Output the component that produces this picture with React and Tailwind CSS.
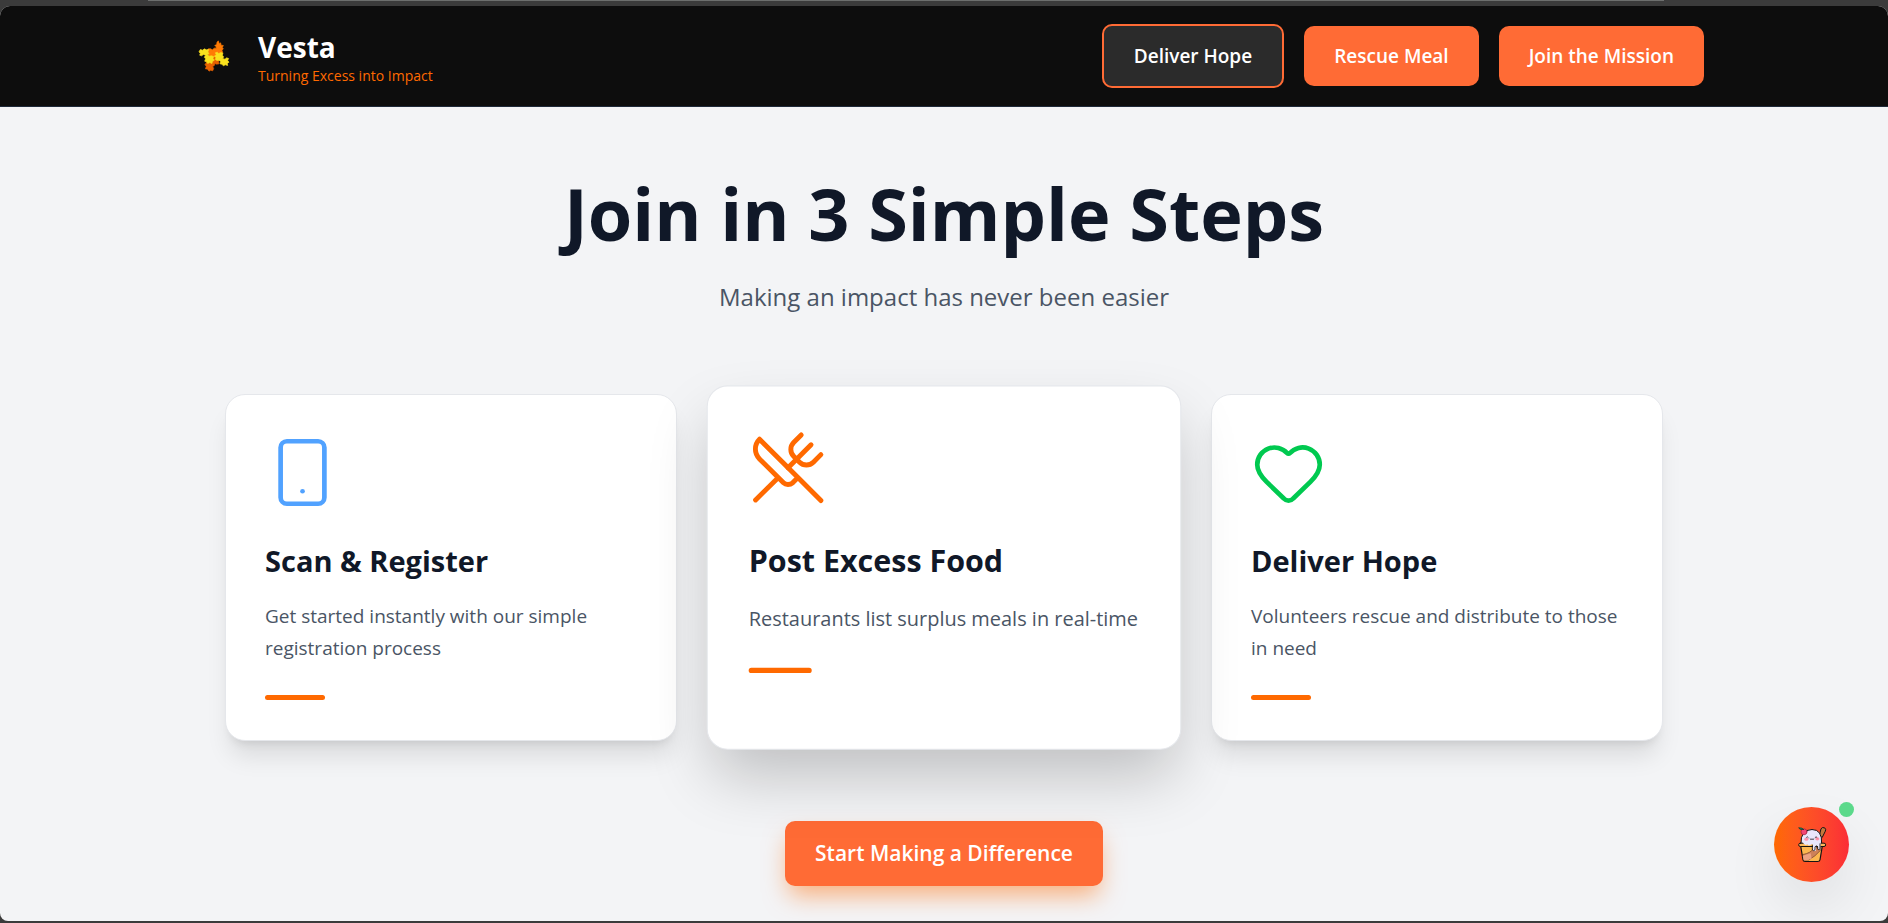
import { Heart, Smartphone, UtensilsCrossed } from "lucide-react";

function Logo() {
  return (
    <svg viewBox="55 28 96 98" className="h-[33px] w-8" strokeWidth="2" strokeLinejoin="round" aria-hidden="true">
      <polygon
        fill="#ff7b05"
        stroke="#ff7b05"
        points="116,30 119,39 123,36 124,43 131,44 128,50 131,54 127,58 129,66 123,72 116,71 110,78 104,79 99,84 93,80 87,81 88,74 84,70 87,65 83,60 86,54 93,54 98,57 104,52 110,52 109,46 105,44 111,41 112,34"
      />
      <polygon
        fill="#e96200"
        stroke="#e96200"
        points="96,82 102,77 110,76 118,80 120,87 117,92 118,99 111,100 106,98 104,104 99,107 102,113 99,120 93,118 88,121 84,115 77,114 80,107 76,101 80,96 80,88 88,90"
      />
      <polygon
        fill="#f9e11e"
        stroke="#f9e11e"
        points="62,56 69,58 74,54 80,57 87,56 85,63 88,68 84,72 89,76 95,75 102,77 100,83 104,88 98,92 97,98 90,95 84,98 81,93 75,91 78,84 74,79 78,73 71,71 66,75 60,73 62,68 58,63"
      />
      <polygon
        fill="#f9e11e"
        stroke="#f9e11e"
        points="107,66 113,64 117,68 124,65 130,67 128,73 132,78 129,83 136,85 141,81 147,83 144,89 148,94 143,97 144,104 137,102 131,105 127,100 121,99 123,92 118,88 112,89 107,86 109,80 104,76 110,72"
      />
    </svg>
  );
}

function IceCream() {
  return (
    <svg viewBox="170 136 90 110" className="h-[37px] w-[30px]" strokeLinejoin="round" strokeLinecap="round" aria-hidden="true">
      <path d="M237 164l5-20q3-6 11-3 5 4 2 10l-9 18z" fill="#c4793d" stroke="#151313" strokeWidth="3" />
      <path d="M182 188q-2-41 33-42 31 0 29 42z" fill="#e9e6fb" stroke="#151313" strokeWidth="3" />
      <path d="M181 195l7 42q1 5 6 5h38q6 0 7-5l7-42z" fill="#fdb750" stroke="#151313" strokeWidth="3.5" />
      <path d="M188 221q24-4 34-21h20l-1 8q-16 19-37 30h-13z" fill="#cf8159" stroke="#4b211a" strokeWidth="1.5" />
      <path d="M187 225l24-8 3 16-12 5h-12z" fill="#eda182" />
      <rect x="175" y="187" width="81" height="10" rx="5" fill="#fdb95a" stroke="#151313" strokeWidth="3" />
      <path d="M185 178q28-7 57 0l-1 11-1 16q-4 4-7-1v-8q-5-3-6 2v10q-5 5-9 0v-16q-2-4-7 0-6 5-10-2-5 5-11-1z" fill="#e9e6fb" />
      <path d="M216 193v14q4 5 8 0v-9q4-6 8 0v7q4 4 7-1v-15" fill="none" stroke="#151313" strokeWidth="2.5" />
      <circle cx="191" cy="153" r="9" fill="#f34774" stroke="#9d1839" strokeWidth="2" />
      <path d="M190 146q-4-6-15-5 2 7 14 5" fill="#159669" stroke="#123d32" strokeWidth="2.5" />
      <ellipse cx="198" cy="175" rx="6" ry="5" fill="#ff92a9" />
      <ellipse cx="231" cy="174" rx="6" ry="5" fill="#ff92a9" />
      <path d="M199 169q3-3 5 1M225 169q3-3 5 1M209 174q3 5 6 0 3 5 6 0" fill="none" stroke="#201a21" strokeWidth="2.5" />
    </svg>
  );
}

const steps = [
  {
    title: "Scan & Register",
    text: "Get started instantly with our simple registration process",
    Icon: Smartphone,
    color: "text-[#51a2ff]",
    frame: "shadow-xl",
  },
  {
    title: "Post Excess Food",
    text: "Restaurants list surplus meals in real-time",
    Icon: UtensilsCrossed,
    color: "text-[#ff6900]",
    frame: "z-10 scale-105 shadow-[0_30px_60px_-6px_rgba(0,0,0,0.22)]",
  },
  {
    title: "Deliver Hope",
    text: "Volunteers rescue and distribute to those in need",
    Icon: Heart,
    color: "text-[#00c950]",
    frame: "shadow-xl",
  },
];

function StepCard({ title, text, Icon, color, frame }) {
  return (
    <article className={`rounded-[20px] border border-gray-200 bg-white px-[39px] py-10 ${frame}`}>
      <Icon size={75} strokeWidth={1.5} className={color} aria-hidden="true" />
      <h2 className="mt-[31px] text-[29px] leading-[40px] font-bold text-[#101828]">{title}</h2>
      <p className="mt-[19px] text-[19px] leading-8 text-[#4a5565]">{text}</p>
      <div className="mt-[31px] h-[5px] w-[60px] rounded-full bg-[#ff6900]" />
    </article>
  );
}

export default function App() {
  return (
    <div className="flex min-h-screen flex-col bg-[#3b3b3b] pb-[2px] font-['Open_Sans','Noto_Sans',sans-serif]">
      <div className="h-[6px] pr-[224px] pl-[148px]">
        <div className="h-px bg-[#6c6e6d]" />
      </div>
      <div className="flex grow flex-col overflow-hidden rounded-t-[10px] rounded-b-lg bg-[#f3f4f6]">
        <header className="border-b border-[#1e2939] bg-[#0d0d0d]">
          <div className="mx-auto flex h-[100px] max-w-[1520px] items-center justify-between">
            <a href="#" className="flex items-center gap-[14px]">
              <span className="flex w-[60px] justify-center">
                <Logo />
              </span>
              <span className="flex flex-col pt-[6px]">
                <span className="text-[28px] leading-[34px] font-bold text-white">Vesta</span>
                <span className="text-[14px] leading-6 text-[#ff6900]">Turning Excess into Impact</span>
              </span>
            </a>
            <nav className="flex items-center gap-5 text-[19px] leading-[30px] font-semibold text-white">
              <button className="rounded-[10px] border-2 border-[#ff6b35] bg-[#2b2b2b] px-[30px] py-[15px]">Deliver Hope</button>
              <button className="rounded-[10px] bg-[#ff6b35] px-[30px] py-[15px]">Rescue Meal</button>
              <button className="rounded-[10px] bg-[#ff6b35] px-[30px] py-[15px]">Join the Mission</button>
            </nav>
          </div>
        </header>
        <main className="flex flex-col items-center px-10 pt-[69px]">
          <h1 className="text-[72px] leading-[75px] font-bold text-[#101828]">Join in 3 Simple Steps</h1>
          <p className="mt-[28px] text-[24px] leading-[35px] text-[#4a5565]">Making an impact has never been easier</p>
          <section className="mt-20 grid w-full max-w-[1438px] grid-cols-3 gap-[41px]">
            {steps.map((step) => (
              <StepCard key={step.title} {...step} />
            ))}
          </section>
          <button className="mt-20 rounded-[10px] bg-[#ff6b35] px-[30px] py-[15px] text-[21px] leading-[35px] font-semibold text-white shadow-[0_13px_25px_-4px_rgba(255,105,0,0.5)]">
            Start Making a Difference
          </button>
        </main>
      </div>
      <button
        aria-label="Open chat"
        className="fixed right-[39px] bottom-[41px] flex size-[75px] items-center justify-center rounded-full bg-linear-to-r from-[#ff6900] to-[#fb2c36] shadow-[0_25px_60px_-6px_rgba(0,0,0,0.12)]"
      >
        <IceCream />
        <span className="absolute -top-[5px] -right-[5px] size-[15px] rounded-full bg-[#5bd98b]" />
      </button>
    </div>
  );
}
